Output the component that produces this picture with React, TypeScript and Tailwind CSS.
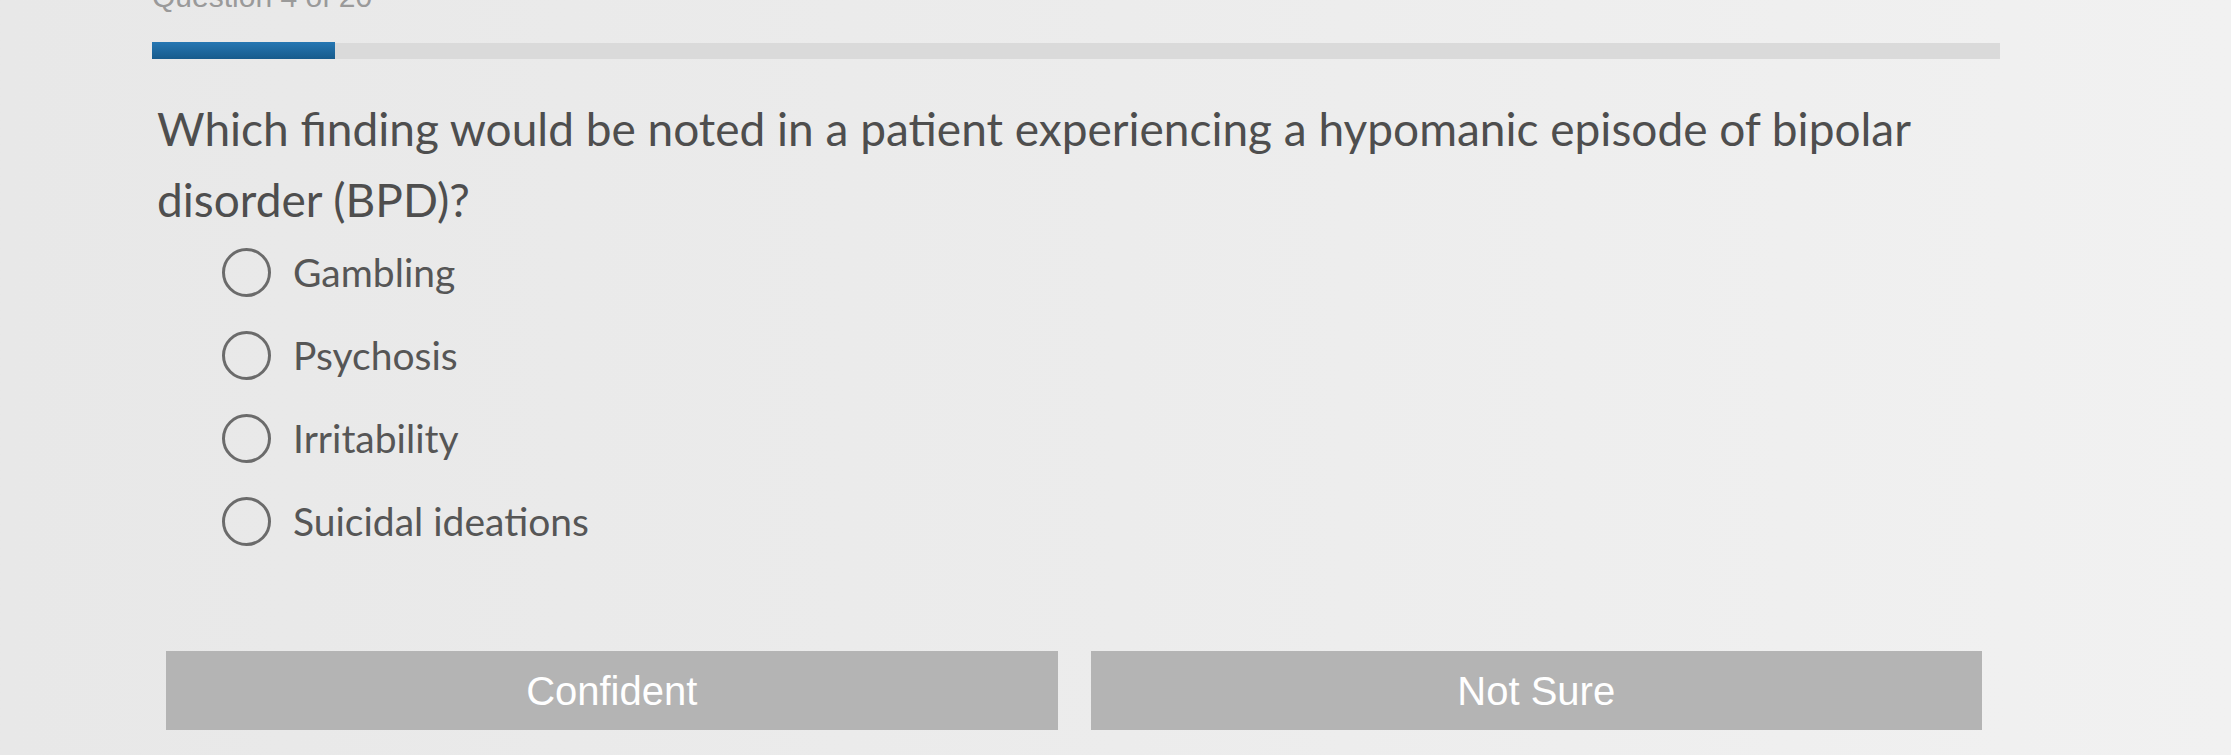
import React from "react";

const options = ["Gambling", "Psychosis", "Irritability", "Suicidal ideations"];

function Radio() {
  return (
    <span className="block w-[49px] h-[49px] rounded-full border-[3px] border-[#6b6b6b] shrink-0" />
  );
}

export default function App() {
  return (
    <div className="w-[2231px] h-[755px] overflow-hidden bg-gradient-to-r from-[#e8e8e8] via-[#ececec] to-[#f1f1f1]">
      <div className="pl-[152px]">
        <div className="mt-[-18px] h-[30px] text-[30px] leading-[30px] text-[#9a9a9a] font-['Liberation_Sans',Arial,sans-serif]">
          Question 4 of 20
        </div>

        <div className="mt-[30px] flex w-[1848px] items-center">
          <div className="h-[17px] w-[183px] bg-gradient-to-b from-[#2677b3] to-[#175b8c]" />
          <div className="h-[16px] flex-1 bg-[#dadada]" />
        </div>

        <h1 className="mt-[34px] ml-[5px] w-[1800px] text-[46px] leading-[71px] font-normal text-[#4e4e4e] font-['Lato','Noto_Sans',sans-serif]">
          Which finding would be noted in a patient experiencing a hypomanic episode of bipolar disorder (BPD)?
        </h1>

        <ul className="mt-[-4px] ml-[70px] flex flex-col">
          {options.map((o) => (
            <li key={o} className="flex h-[83px] items-center gap-[22px]">
              <Radio />
              <span className="text-[39px] text-[#565656] font-['Lato','Noto_Sans',sans-serif]">
                {o}
              </span>
            </li>
          ))}
        </ul>
      </div>

      <div className="mt-[88px] ml-[166px] grid w-[1816px] grid-cols-2 gap-[33px]">
        <button className="h-[79px] bg-[#b4b4b4] text-[40px] text-white font-['Liberation_Sans',Arial,sans-serif]">
          Confident
        </button>
        <button className="h-[79px] bg-[#b4b4b4] text-[40px] text-white font-['Liberation_Sans',Arial,sans-serif]">
          Not Sure
        </button>
      </div>
    </div>
  );
}
